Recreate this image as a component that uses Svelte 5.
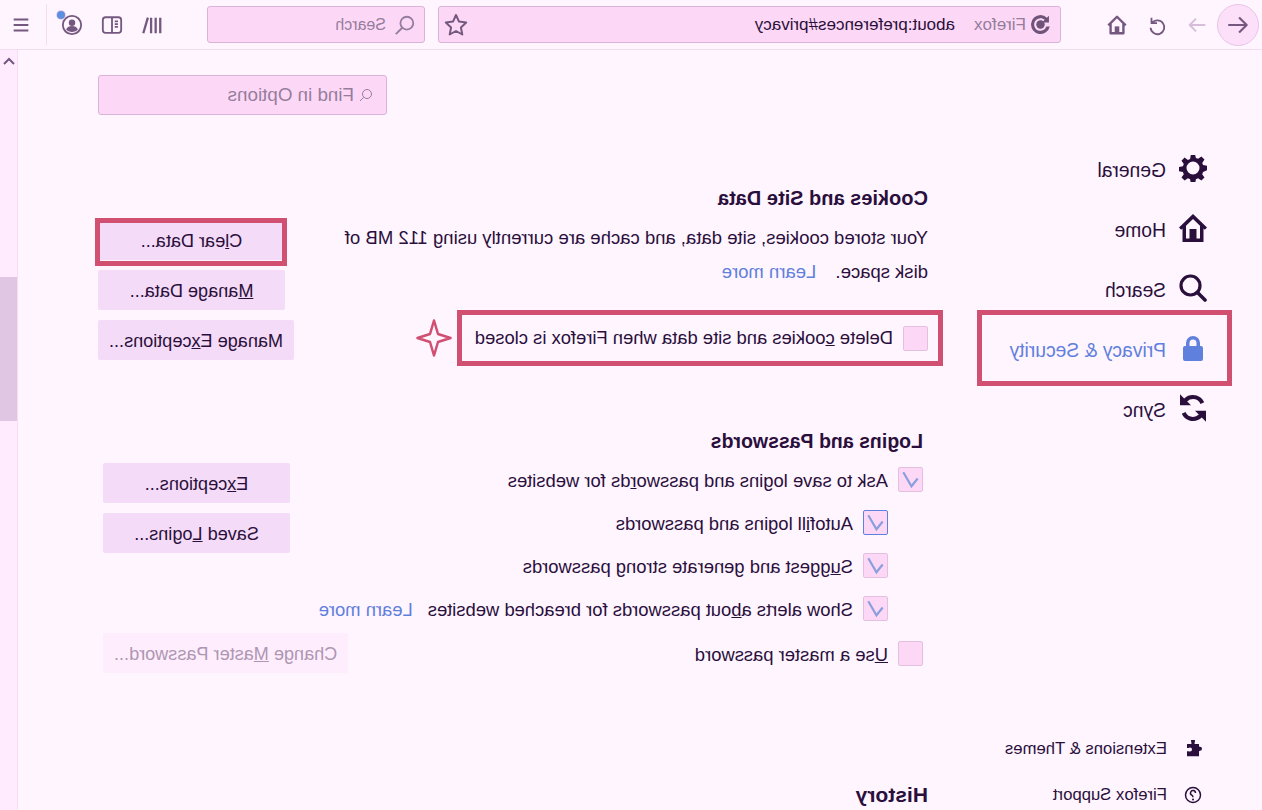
<script>
	const categories = [
		{ id: 'general', label: 'General' },
		{ id: 'home', label: 'Home' },
		{ id: 'search', label: 'Search' },
		{ id: 'privacy', label: 'Privacy & Security' },
		{ id: 'sync', label: 'Sync' },
	]
</script>

{#snippet navIcon(id)}
	<svg class="nav-icon" viewBox="0 0 28 28">
		{#if id === 'general'}
			<path d="M11.800 1h4.400l.7 4 2.200.9 3.300-2.300 3.100 3.100-2.300 3.300.9 2.200 3.900.7v4.400l-3.900.7-.9 2.200 2.300 3.300-3.100 3.100-3.300-2.300-2.200.9-.7 3.900h-4.400l-.7-3.900-2.200-.9-3.300 2.300-3.100-3.100 2.300-3.300-.9-2.200L0 16.200v-4.400l3.900-.7.9-2.200-2.300-3.300 3.100-3.100 3.300 2.300 2.200-.9z M14 7.500a6.500 6.500 0 1 0 0 13 6.500 6.500 0 0 0 0-13z" fill-rule="evenodd" />
		{:else if id === 'home'}
			<path d="M14 0 0 13.500l2.200 2.300L3.500 14.600V28h21V14.600l1.300 1.200L28 13.500z M14 5l7 6.700V24.500h-3.500V15h-7v9.500H7V11.700z" fill-rule="evenodd" />
			<path d="M12.500 16.500h3v8h-3z" />
		{:else if id === 'search'}
			<circle cx="16.500" cy="11.500" r="9.500" fill="none" stroke="currentColor" stroke-width="3.200" />
			<path d="M9.500 18.500 2 26" fill="none" stroke="currentColor" stroke-width="3.600" stroke-linecap="round" />
		{:else if id === 'privacy'}
			<path d="M14 2a7 7 0 0 0-7 7v3H6a2 2 0 0 0-2 2v11a2 2 0 0 0 2 2h16a2 2 0 0 0 2-2V14a2 2 0 0 0-2-2h-1V9a7 7 0 0 0-7-7zm-3.500 10V9a3.500 3.500 0 0 1 7 0v3z" fill-rule="evenodd" />
		{:else}
			<path d="M14 1c-5 0-9.300 3-11.200 7.300l3.700 1.600A8.300 8.300 0 0 1 14 5a8.200 8.200 0 0 1 5.800 2.400L16 11.200h11V.2l-4.200 4.200A12.300 12.300 0 0 0 14 1z" />
			<path d="M14 27c5 0 9.300-3 11.200-7.300l-3.700-1.600A8.300 8.300 0 0 1 14 23a8.200 8.200 0 0 1-5.800-2.400l3.800-3.800H1v11l4.200-4.200A12.300 12.300 0 0 0 14 27z" />
		{/if}
	</svg>
{/snippet}

{#snippet tick()}
	<svg viewBox="0 0 24 24"><path d="M4.500 11 11 19l8.500-14.500" /></svg>
{/snippet}

<div class="app">
	<header class="toolbar">
		<button class="round-back" aria-label="Back">
			<svg viewBox="0 0 24 24"><path d="M21 12H4M11 5l-7 7 7 7" /></svg>
		</button>
		<button class="tool faded first" aria-label="Forward">
			<svg viewBox="0 0 24 24"><path d="M3 12h17M13 5l7 7-7 7" /></svg>
		</button>
		<button class="tool" aria-label="Reload">
			<svg viewBox="0 0 24 24"><path d="M18 4v6h-6M17.500 10A7.500 7.500 0 1 0 19 15" /></svg>
		</button>
		<button class="tool home-tool" aria-label="Home">
			<svg viewBox="0 0 24 24">
				<path d="M2.500 12.500 12 3l9.500 9.500M5 10.500V21h14V10.500" />
				<path class="solid" d="M9.500 13.500h5V21h-5z" />
			</svg>
		</button>

		<div class="urlbar">
			<svg class="identity" viewBox="0 0 18 18">
				<path d="M9 0a9 9 0 1 1-8.800 11h3.200A6 6 0 1 0 9 3c-1.600 0-3 .6-4 1.600L7.500 7H1V.6l1.900 1.900A9 9 0 0 1 9 0z" />
				<circle cx="9" cy="9" r="4" />
			</svg>
			<span class="brand">Firefox</span>
			<span class="address">about:preferences#privacy</span>
			<svg class="star" viewBox="0 0 24 24"><path d="M12 2l3 6.600 7.200.9-5.300 4.900 1.400 7.100L12 18l-6.300 3.500 1.400-7.100L1.800 9.500 9 8.600z" /></svg>
		</div>

		<div class="searchbar">
			<svg viewBox="0 0 24 24"><circle cx="10" cy="10" r="7" /><path d="M15 15l7 7" /></svg>
			<span>Search</span>
		</div>

		<button class="tool library" aria-label="Library">
			<svg viewBox="0 0 24 24"><path d="M3 4v17M8 4v17M13 4v17M16.500 4l5 17" /></svg>
		</button>
		<button class="tool side" aria-label="Sidebar">
			<svg viewBox="0 0 24 24"><rect x="2" y="3.500" width="20" height="17" rx="3" /><path d="M12 3.500v17M5.500 8h3.500M5.500 11h3.500M5.500 14h3.500" /></svg>
		</button>
		<button class="tool account" aria-label="Account">
			<svg viewBox="0 0 24 24">
				<circle cx="12" cy="12" r="10" />
				<circle class="solid" cx="12" cy="9.500" r="3.500" />
				<path class="solid" d="M5.500 17c1-3 3.800-4 6.500-4s5.500 1 6.500 4c-1.500 1.700-4 2.500-6.500 2.500S7 18.700 5.500 17z" />
			</svg>
			<span class="dot"></span>
		</button>
		<span class="divider"></span>
		<button class="tool menu" aria-label="Menu">
			<svg viewBox="0 0 24 24"><path d="M4 6h16M4 12h16M4 18h16" /></svg>
		</button>
	</header>

	<div class="page">
		<nav class="sidebar">
			<ul class="categories">
				{#each categories as cat}
					<li class="category" class:selected={cat.id === 'privacy'}>
						{@render navIcon(cat.id)}
						<span>{cat.label}</span>
					</li>
				{/each}
			</ul>
			<ul class="footer-links">
				<li>
					<svg viewBox="0 0 18 18"><path d="M7 1a2 2 0 0 1 4 0c0 .6-.3 1-.4 1.500V4H15v4h-1.500c-.5 0-.9-.4-1.500-.4a2 2 0 0 0 0 4c.6 0 1-.4 1.500-.4H15v5H3v-4.500c0-.5-.4-.9-1-.9a2 2 0 0 1 0-4c.6 0 1-.4 1-.9V4h4.400V2.500C7.300 2 7 1.600 7 1z" /></svg>
					<span>Extensions &amp; Themes</span>
				</li>
				<li>
					<svg viewBox="0 0 18 18"><circle class="ring" cx="9" cy="9" r="7.500" /><path class="ring" d="M6.500 7a2.500 2.500 0 1 1 3.700 2.200c-.8.500-1.200 1-1.200 2" /><circle cx="9" cy="13.500" r="1" /></svg>
					<span>Firefox Support</span>
				</li>
			</ul>
		</nav>

		<main class="content">
			<div class="find-row">
				<div class="find">
					<svg viewBox="0 0 16 16"><circle cx="7" cy="7" r="4.500" /><path d="M10.500 10.500 14 14" /></svg>
					<span>Find in Options</span>
				</div>
			</div>

			<section class="prefs cookies">
				<h2>Cookies and Site Data</h2>
				<div class="main-col">
					<p class="usage">
						Your stored cookies, site data, and cache are currently using 112 MB of disk space.
						<a href="#more">Learn more</a>
					</p>
					<label class="check delete">
						<span class="box"></span>
						<span>Delete <u>c</u>ookies and site data when Firefox is closed</span>
						<svg class="spark" viewBox="0 0 36 38"><path d="M18 1.500 22 15l12.500 4L22 23l-4 13.500L14 23 1.500 19 14 15z" /></svg>
					</label>
				</div>
				<div class="buttons">
					<button class="btn marked">C<u>l</u>ear Data...</button>
					<button class="btn"><u>M</u>anage Data...</button>
					<button class="btn">Manage E<u>x</u>ceptions...</button>
				</div>
			</section>

			<section class="prefs logins">
				<h2>Logins and Passwords</h2>
				<div class="main-col rows">
					<label class="check">
						<span class="box on">{@render tick()}</span>
						<span class="text">Ask to save logins and passwo<u>r</u>ds for websites</span>
					</label>
					<label class="check sub">
						<span class="box on focus">{@render tick()}</span>
						<span class="text">Autof<u>i</u>ll logins and passwords</span>
					</label>
					<label class="check sub">
						<span class="box on">{@render tick()}</span>
						<span class="text">S<u>u</u>ggest and generate strong passwords</span>
					</label>
					<label class="check sub">
						<span class="box on">{@render tick()}</span>
						<span class="text">Show alerts a<u>b</u>out passwords for breached websites</span>
						<a class="more text" href="#more">Learn more</a>
					</label>
					<label class="check master">
						<span class="box"></span>
						<span class="text"><u>U</u>se a master password</span>
					</label>
				</div>
				<div class="buttons">
					<button class="btn">E<u>x</u>ceptions...</button>
					<button class="btn">Saved <u>L</u>ogins...</button>
					<button class="btn disabled">Change <u>M</u>aster Password...</button>
				</div>
			</section>

			<h2 class="history">History</h2>
		</main>

		<div class="scrollbar">
			<svg viewBox="0 0 12 8"><path d="M1 7l5-5 5 5" /></svg>
			<span class="thumb"></span>
		</div>
	</div>
</div>

<style>
	:global(body) {
		margin: 0;
		background: #fff5ff;
	}

	.app {
		width: 1262px;
		height: 810px;
		overflow: hidden;
		transform: scaleX(-1);
		background: #fff5ff;
		color: #2a0f3c;
		font-family: 'Liberation Sans', Arial, sans-serif;
		font-size: 18.400px;
	}

	button {
		font: inherit;
		color: inherit;
		border: none;
		background: none;
		padding: 0;
	}

	ul {
		list-style: none;
		margin: 0;
		padding: 0;
	}

	h2 {
		margin: 0;
		font-size: 20px;
		line-height: 24px;
		font-weight: 700;
	}

	/* toolbar */
	.toolbar {
		height: 49px;
		box-sizing: content-box;
		border-bottom: 1px solid #f2deef;
		display: flex;
		align-items: center;
		padding-left: 3px;
	}

	.toolbar > * {
		flex: none;
	}

	.toolbar svg {
		fill: none;
		stroke: #75587f;
		stroke-width: 2;
		stroke-linejoin: round;
	}

	.toolbar .solid {
		fill: #75587f;
		stroke: none;
	}

	.round-back {
		width: 42px;
		height: 42px;
		border-radius: 50%;
		background: #fcdff8;
		border: 1px solid #e8c6e6;
		box-sizing: border-box;
		display: flex;
		align-items: center;
		justify-content: center;
	}

	.round-back svg {
		width: 26px;
		height: 26px;
	}

	.tool {
		width: 22px;
		height: 22px;
		margin-left: 18px;
		display: flex;
		position: relative;
	}

	.first {
		margin-left: 9px;
	}

	.tool svg {
		width: 22px;
		height: 22px;
	}

	.toolbar .home-tool svg {
		stroke-width: 2.600;
	}

	.faded svg {
		stroke: #d6bedb;
	}

	.urlbar,
	.searchbar {
		height: 37px;
		box-sizing: border-box;
		background: #fdd8f6;
		border: 1px solid #d9b4d8;
		border-radius: 3px;
		display: flex;
		align-items: center;
	}

	.urlbar {
		width: 623px;
		margin-left: 45px;
		padding-left: 10px;
		font-size: 17px;
	}

	.identity {
		width: 19px;
		height: 19px;
		flex: none;
	}

	.toolbar .identity {
		stroke: none;
		fill: #6f5379;
	}

	.brand {
		margin-left: 5px;
		color: #957d9d;
	}

	.address {
		margin-left: 19px;
		color: #2a0f3c;
	}

	.star {
		width: 24px;
		height: 24px;
		margin-left: auto;
		margin-right: 5px;
	}

	.searchbar {
		width: 218px;
		margin-left: 13px;
		padding-left: 8px;
		color: #957d9d;
		gap: 8px;
		font-size: 16px;
	}

	.toolbar .searchbar svg {
		width: 22px;
		height: 22px;
		stroke: #957d9d;
	}

	.library {
		margin-left: 44px;
	}

	.toolbar .library svg {
		stroke-width: 2.500;
	}

	.dot {
		position: absolute;
		top: -3px;
		right: -4px;
		width: 8px;
		height: 8px;
		background: #5b8fe0;
		border-radius: 50%;
		box-shadow: 0 0 0 1px #f3cfee;
	}

	.divider {
		width: 1px;
		height: 41px;
		margin-left: 14px;
		background: #f2deef;
	}

	.menu {
		margin-left: 14px;
	}

	/* page */
	.page {
		display: flex;
		height: 760px;
	}

	.sidebar {
		width: 334px;
		flex: none;
		padding-top: 91px;
		box-sizing: border-box;
	}

	.category {
		height: 60px;
		margin-left: 55px;
		display: flex;
		align-items: center;
		gap: 13px;
		font-size: 19.300px;
		position: relative;
	}

	.nav-icon {
		width: 28px;
		height: 28px;
		flex: none;
		margin-top: -6px;
		fill: currentColor;
	}

	.selected {
		color: #5f80dc;
	}

	.selected::after {
		content: '';
		position: absolute;
		left: -25px;
		top: -11px;
		width: 255px;
		height: 76px;
		box-sizing: border-box;
		border: 5px solid #d14f71;
	}

	.footer-links {
		margin-top: 285px;
		margin-left: 60px;
		font-size: 16.700px;
	}

	.footer-links li {
		height: 46px;
		display: flex;
		align-items: center;
		gap: 17px;
	}

	.footer-links svg {
		width: 18px;
		height: 18px;
		flex: none;
		fill: currentColor;
	}

	.footer-links .ring {
		fill: none;
		stroke: currentColor;
		stroke-width: 1.500;
	}

	.content {
		flex: 1;
		min-width: 0;
		padding-top: 25px;
	}

	.find-row {
		width: 830px;
		display: flex;
		justify-content: flex-end;
	}

	.find {
		width: 289px;
		height: 40px;
		box-sizing: border-box;
		background: #fdd8f6;
		border: 1px solid #d9b4d8;
		border-radius: 3px;
		display: flex;
		align-items: center;
		gap: 4px;
		padding-left: 12px;
		color: #957d9d;
		font-size: 18.800px;
	}

	.find svg {
		width: 16px;
		height: 16px;
		fill: none;
		stroke: #957d9d;
	}

	.prefs {
		display: grid;
		grid-template-columns: 1fr auto;
		column-gap: 10px;
	}

	.prefs h2 {
		grid-column: 1 / -1;
		margin-bottom: 10px;
	}

	.cookies {
		width: 830px;
		margin-top: 71px;
	}

	.logins {
		width: 820px;
		margin: 63px 0 0 5px;
	}

	.logins h2 {
		font-size: 19.500px;
	}

	.main-col {
		min-width: 0;
	}

	.usage {
		margin: 1px 0 0;
		width: 592px;
		line-height: 34px;
		font-size: 18.500px;
	}

	a {
		color: #5f80dc;
		text-decoration: none;
	}

	.usage a {
		margin-left: 14px;
	}

	.check {
		display: flex;
		align-items: center;
		gap: 10px;
		height: 25px;
		position: relative;
		white-space: nowrap;
	}

	.text {
		margin-top: 3px;
	}

	.box {
		width: 25px;
		height: 25px;
		box-sizing: border-box;
		flex: none;
		background: #fdd8f6;
		border: 1px solid #e3c0e0;
		border-radius: 2px;
		display: flex;
	}

	.box :global(svg) {
		width: 100%;
		height: 100%;
		fill: none;
		stroke: #8a9fdc;
		stroke-width: 2.300;
	}

	.focus {
		border-color: #5f80dc;
	}

	.delete {
		width: 486px;
		height: 56px;
		box-sizing: border-box;
		margin: 21px 0 0 -15px;
		padding-left: 10px;
		border: 5px solid #d14f71;
	}

	.spark {
		position: absolute;
		right: -46px;
		top: 4px;
		width: 36px;
		height: 38px;
		fill: none;
		stroke: #d14f71;
		stroke-width: 2.500;
		stroke-linejoin: round;
	}

	.buttons {
		display: flex;
		flex-direction: column;
		align-items: flex-end;
		gap: 10px;
	}

	.btn {
		min-width: 187px;
		height: 40px;
		padding: 2px 11px 0;
		box-sizing: border-box;
		background: #f4dbf7;
		border-radius: 2px;
		position: relative;
		font-size: 18.100px;
	}

	.marked::after {
		content: '';
		position: absolute;
		left: -2px;
		right: -3px;
		top: -2px;
		bottom: -6px;
		border: 5px solid #d14f71;
	}

	.disabled {
		margin-top: 70px;
		background: #feeefd;
		color: #ae96b3;
	}

	.rows {
		padding-top: 4px;
		display: flex;
		flex-direction: column;
		gap: 18px;
	}

	.sub {
		margin-left: 35px;
	}

	.more {
		margin-left: 5px;
	}

	.master {
		margin-top: 2px;
	}

	.history {
		margin-top: 110px;
		font-size: 21px;
	}

	.scrollbar {
		width: 17px;
		flex: none;
		background: #ffebfd;
		border-left: 1px solid #f8dcf4;
		position: relative;
	}

	.scrollbar svg {
		display: block;
		width: 12px;
		height: 8px;
		margin: 7px 0 0 2px;
		fill: none;
		stroke: #75587f;
		stroke-width: 2;
	}

	.thumb {
		position: absolute;
		top: 227px;
		left: 0;
		right: 0;
		height: 144px;
		background: #e0c6e3;
	}
</style>
